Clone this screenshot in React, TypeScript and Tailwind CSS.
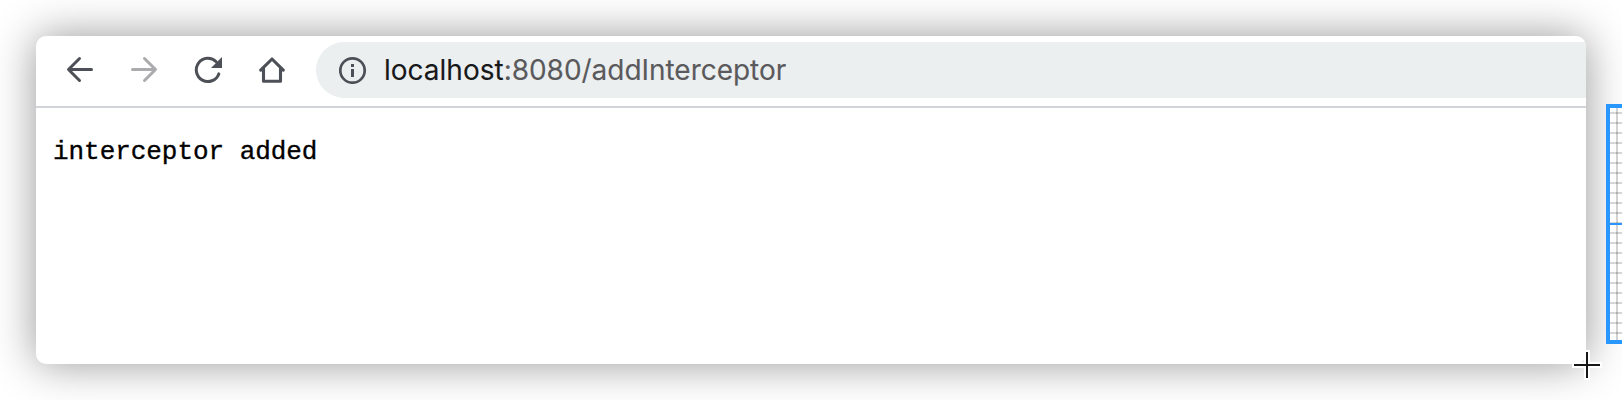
function BackArrow() {
  return (
    <svg className="h-8 w-8" viewBox="0 0 32 32" fill="none" stroke="#4d5056" strokeWidth="3" strokeLinecap="round" strokeLinejoin="round">
      <path d="M27.5 15.5H4.8M15.5 4.5L4.5 15.5L15.5 26.5" />
    </svg>
  );
}

function ForwardArrow() {
  return (
    <svg className="h-8 w-8" viewBox="0 0 32 32" fill="none" stroke="#ababad" strokeWidth="3" strokeLinecap="round" strokeLinejoin="round">
      <path d="M4.5 15.5H27.2M16.5 4.5L27.5 15.5L16.5 26.5" />
    </svg>
  );
}

function Reload() {
  return (
    <svg className="h-8 w-8" viewBox="0 0 32 32" fill="none">
      <path d="M26.8 19.9A11.6 11.6 0 1 1 24.2 7.8" stroke="#4d5056" strokeWidth="3" strokeLinecap="round" />
      <path d="M30 3V14H19Z" fill="#4d5056" />
    </svg>
  );
}

function Home() {
  return (
    <svg className="h-8 w-8" viewBox="0 0 32 32" fill="none" stroke="#4d5056" strokeWidth="3.1" strokeLinecap="round" strokeLinejoin="round">
      <path d="M4.7 16.2L16 5L27.3 16.2M7.5 14.5V27.3H24.5V14.5" />
    </svg>
  );
}

function Info() {
  return (
    <svg className="h-7 w-7 shrink-0" viewBox="0 0 28 28" fill="none">
      <circle cx="14.5" cy="14.5" r="12.2" stroke="#4d5056" strokeWidth="2.7" />
      <path d="M13 8h3v3h-3zM13 13h3v8h-3z" fill="#4d5056" />
    </svg>
  );
}

const rows = [4, 14, 24, 34, 44, 54, 64, 74, 84, 94, 104, 114, 124, 134, 144, 154, 164, 174, 184, 194, 204, 214, 224];

export default function App() {
  return (
    <div className="relative h-[400px] w-full overflow-hidden bg-white p-9">
      <main className="flex h-[328px] w-[1550px] flex-col overflow-hidden rounded-[10px] bg-white shadow-[0_0_44px_rgba(0,0,0,0.41)]">
        <header className="flex h-[72px] shrink-0 border-b-2 border-[#d1d4d9] pt-1.5">
          <nav className="flex h-14 w-[280px] shrink-0 items-center gap-8 pl-7">
            <BackArrow />
            <ForwardArrow />
            <Reload />
            <Home />
          </nav>
          <div className="flex h-14 flex-1 items-center rounded-l-full bg-[#ebeff0] pl-[22px] font-['Inter',sans-serif] text-[28px] leading-8 text-[#5a5a5c] [-webkit-text-stroke:0.1px]">
            <Info />
            <span className="ml-[18px] text-[#18181a]">localhost</span>
            <span className="tracking-[-0.03px]">:8080/addInterceptor</span>
          </div>
        </header>
        <pre className="pl-[17px] pt-[29px] font-['Courier_New','Liberation_Mono',monospace] text-[26px] leading-[30px] tracking-[-0.05px] text-black [-webkit-text-stroke:0.35px]">
          interceptor added
        </pre>
      </main>

      <div className="absolute top-[104px] left-[1606px] h-60 w-6 overflow-hidden border-4 border-[#2997ff] bg-white">
        <svg className="h-[232px] w-4" viewBox="0 0 16 232">
          {rows.map((y) => (
            <rect key={y} x="0" y={y} width="16" height="2" fill="#000" fillOpacity="0.16" />
          ))}
          <rect x="6" y="0" width="2" height="232" fill="#000" fillOpacity="0.18" />
          <rect x="0" y="115" width="16" height="2" fill="#2997ff" />
        </svg>
      </div>

      <svg className="absolute top-[350px] left-[1572px] h-[30px] w-[30px]" viewBox="0 0 30 30">
        <path d="M12 0h6v12h12v6H18v12h-6V18H0v-6h12z" fill="#fff" />
        <path d="M14 2h2v12h12v2H16v12h-2V16H2v-2h12z" fill="#171717" />
      </svg>
    </div>
  );
}
